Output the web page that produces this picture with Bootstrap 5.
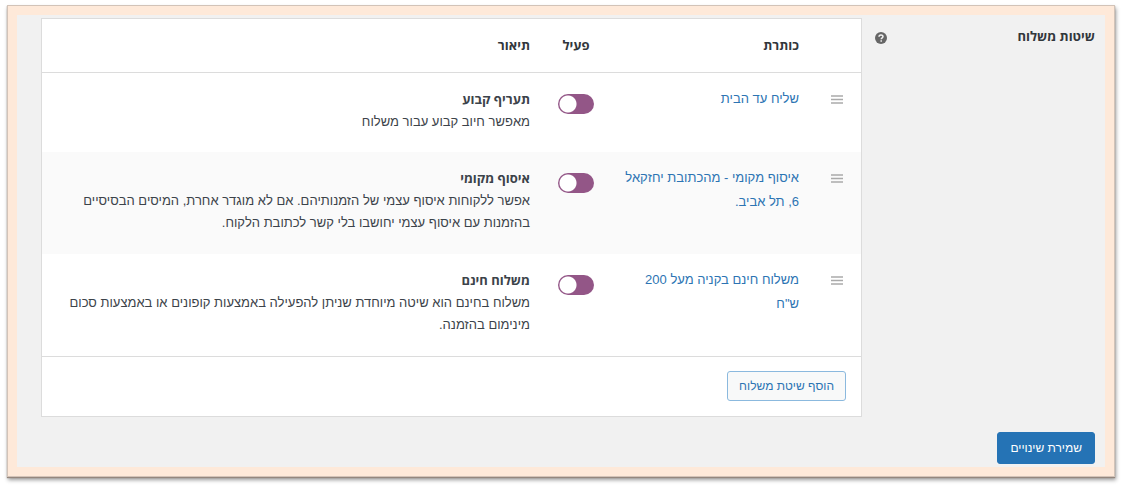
<!DOCTYPE html>
<html lang="he" dir="rtl">
<head>
<meta charset="utf-8">
<meta name="viewport" content="width=device-width, initial-scale=1">
<title>שיטות משלוח</title>
<link rel="stylesheet" href="https://cdn.jsdelivr.net/npm/bootstrap@5.3.0/dist/css/bootstrap.min.css">
<style>
  body { font: 13px/22px "Liberation Sans", Arial, sans-serif; color: #3c434a; background: #fff; padding: 5px 8px 10px 7px; }
  strong, th { font-family: "Open Sans", "Liberation Sans", sans-serif; }
  .frame { background: #f1f1f1; border: 10px solid #fee9d9; outline: 1px solid #d2c3b8; outline-offset: -1px; box-shadow: 0 1px 1px #94867d, 1px 3px 4px rgba(0,0,0,.4); padding: 3px 10px 3px 24px; }
  .side-label { width: 233px; padding-top: 7px; color: #32373c; }
  .side-label svg { margin-left: 13px; margin-top: 4px; }
  .methods { background: #fff; border: 1px solid #dcdcdc; }
  .methods table { table-layout: fixed; --bs-table-bg: transparent; color: inherit; }
  .methods th, .methods td { padding: 14px 0 19px 8px; border: 0; vertical-align: top; text-align: right; }
  .methods thead th { padding: 14px 0 15px; line-height: 24px; border-bottom: 1px solid #dcdcdc; color: #32373c; }
  .methods tbody tr:nth-child(even) { background: #fafafa; }
  .methods tbody tr:nth-child(n+2) td { padding-bottom: 20px; }
  .methods .desc-cell { padding-right: 10px; padding-left: 20px; }
  .methods .active-cell { padding-left: 0; text-align: center; }
  .methods .grip-cell { padding-left: 0; padding-right: 18px; line-height: 24px; }
  .methods tfoot td { border-top: 1px solid #dcdcdc; padding: 14px 15px 15px; line-height: 1; }
  .col-grip { width: 62px; }
  .col-name { width: 187px; }
  .col-active { width: 72px; }
  a, .method-name { color: #2c74b3; line-height: 24px; }
  .desc-cell strong { display: block; line-height: 24px; }
  .toggle { appearance: none; width: 36px; height: 20px; margin: 7px 0 0; border: 0; border-radius: 10px; background: radial-gradient(circle at 10px 10px, #fff 8px, #935687 9px); display: inline-block; vertical-align: top; }
  .btn { font-size: 12px; line-height: 18px; border-radius: 3px; }
  .btn-add { padding: 5px 11px; color: #2c74b3; border-color: #8bb9de; background: #f8f9f9; }
  .btn-save { padding: 6px 12px; color: #fff; background: #2573b5; border-color: #2573b5; margin-top: 15px; }
</style>
</head>
<body>
<main class="frame">
  <div class="d-flex align-items-start">
    <div class="side-label d-flex justify-content-between align-items-center flex-shrink-0">
      <strong>שיטות משלוח</strong>
      <svg width="12" height="12" viewBox="0 0 12 12" aria-hidden="true"><circle cx="6" cy="6" r="6" fill="#666"/><path d="M4 4.8C4 2.3 8 2.300 8 4.600C8 5.900 6.200 5.800 6.200 7.300M6.200 8.300V9.700" fill="none" stroke="#f1f1f1" stroke-width="1.500"/></svg>
    </div>
    <section class="methods flex-grow-1">
      <table class="table mb-0">
        <colgroup><col class="col-grip"><col class="col-name"><col class="col-active"><col></colgroup>
        <thead>
          <tr><th></th><th scope="col">כותרת</th><th scope="col" class="active-cell">פעיל</th><th scope="col" class="desc-cell">תיאור</th></tr>
        </thead>
        <tbody>
          <tr>
            <td class="grip-cell"><svg width="12" height="9" viewBox="0 0 12 9" aria-hidden="true"><path d="M0 1h12M0 4.500h12M0 8h12" stroke="#aaa" stroke-width="1.400"/></svg></td>
            <td><a href="#" class="method-name text-decoration-none">שליח עד הבית</a></td>
            <td class="active-cell"><input type="checkbox" role="switch" class="toggle" checked aria-label="שליח עד הבית"></td>
            <td class="desc-cell"><strong>תעריף קבוע</strong>מאפשר חיוב קבוע עבור משלוח</td>
          </tr>
          <tr>
            <td class="grip-cell"><svg width="12" height="9" viewBox="0 0 12 9" aria-hidden="true"><path d="M0 1h12M0 4.500h12M0 8h12" stroke="#aaa" stroke-width="1.400"/></svg></td>
            <td><a href="#" class="method-name text-decoration-none">איסוף מקומי - מהכתובת יחזקאל 6, תל אביב.</a></td>
            <td class="active-cell"><input type="checkbox" role="switch" class="toggle" checked aria-label="איסוף מקומי"></td>
            <td class="desc-cell"><strong>איסוף מקומי</strong>אפשר ללקוחות איסוף עצמי של הזמנותיהם. אם לא מוגדר אחרת, המיסים הבסיסיים בהזמנות עם איסוף עצמי יחושבו בלי קשר לכתובת הלקוח.</td>
          </tr>
          <tr>
            <td class="grip-cell"><svg width="12" height="9" viewBox="0 0 12 9" aria-hidden="true"><path d="M0 1h12M0 4.500h12M0 8h12" stroke="#aaa" stroke-width="1.400"/></svg></td>
            <td><a href="#" class="method-name text-decoration-none">משלוח חינם בקניה מעל 200 ש"ח</a></td>
            <td class="active-cell"><input type="checkbox" role="switch" class="toggle" checked aria-label="משלוח חינם"></td>
            <td class="desc-cell"><strong>משלוח חינם</strong>משלוח בחינם הוא שיטה מיוחדת שניתן להפעילה באמצעות קופונים או באמצעות סכום מינימום בהזמנה.</td>
          </tr>
        </tbody>
        <tfoot>
          <tr><td colspan="4"><button type="button" class="btn btn-add">הוסף שיטת משלוח</button></td></tr>
        </tfoot>
      </table>
    </section>
  </div>
  <button type="submit" class="btn btn-save">שמירת שינויים</button>
</main>
<script src="https://cdn.jsdelivr.net/npm/bootstrap@5.3.0/dist/js/bootstrap.bundle.min.js"></script>
</body>
</html>
